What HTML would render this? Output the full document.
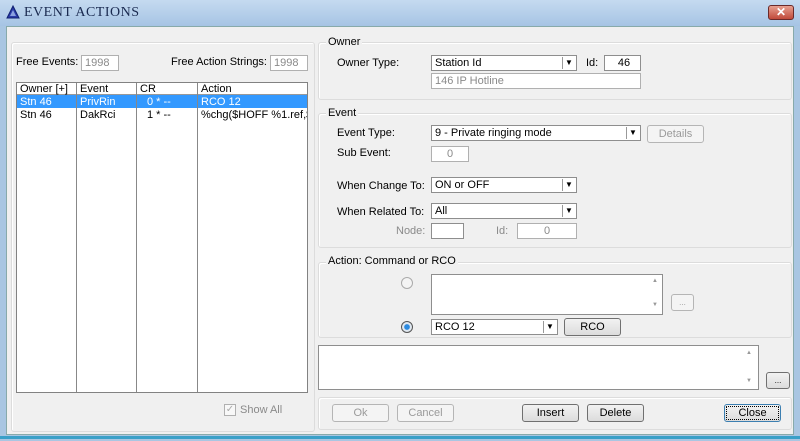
<!DOCTYPE html>
<html><head><style>
*{box-sizing:border-box;margin:0;padding:0}
body{width:800px;height:441px;overflow:hidden;background:#a9c6e2;font-family:"Liberation Sans",sans-serif;font-size:11px;color:#000;position:relative}
.a{position:absolute}
.tb{left:0;top:0;width:800px;height:26px;background:linear-gradient(#c5daf0,#a6c4e4);}
.body{left:6px;top:26px;width:788px;height:409px;background:#f0f0f0;border:1px solid #8aa;}
.grp{position:absolute;border:1px solid #dcdcdc;border-radius:3px;box-shadow:inset 1px 1px 0 #fff}
.gl{position:absolute;background:#f0f0f0;padding:0 2px;color:#000}
.in{position:absolute;background:#fff;border:1px solid #8e8e8e;height:16px;line-height:14px;padding-left:3px}
.dis{color:#8a8a8a;border-color:#b0b0b0}
.dd{position:absolute;right:1px;top:1px;width:13px;height:12px;border-left:1px solid #999;font-size:8px;text-align:center;line-height:12px}
.btn{position:absolute;height:18px;border:1px solid #707070;border-radius:3px;background:linear-gradient(#f2f2f2,#dcdcdc);text-align:center;line-height:16px}
.bd{color:#9a9a9a;border-color:#b5b5b5;background:#f4f4f4}
.lbl{position:absolute}
</style></head><body>
<div class="a tb"></div>
<svg class="a" style="left:6px;top:5px" width="14" height="14"><polygon points="7,1 13,13 1,13" fill="#2a3aa8" stroke="#102070"/><polygon points="7,5 10,11 4,11" fill="#8aa0e0"/></svg>
<div class="a" style="left:24px;top:5px;font-family:'Liberation Serif',serif;font-size:14px;color:#1a2a50;letter-spacing:0.5px">EVENT ACTIONS</div>
<div class="a" style="left:768px;top:5px;width:26px;height:15px;border:1px solid #6a2a2a;border-radius:3px;background:linear-gradient(#e8a090,#c04a3a);color:#fff;font-weight:bold;text-align:center;line-height:13px;font-size:12px">✕</div>
<div class="a body"></div>
<div class="a" style="left:0;top:436px;width:800px;height:3px;background:#3aa0c8"></div>

<!-- left group -->
<div class="grp" style="left:11px;top:42px;width:304px;height:390px"></div>
<div class="lbl" style="left:16px;top:56px">Free Events:</div>
<div class="in dis" style="left:81px;top:55px;width:38px">1998</div>
<div class="lbl" style="left:171px;top:56px">Free Action Strings:</div>
<div class="in dis" style="left:270px;top:55px;width:38px">1998</div>
<div class="a" style="left:16px;top:82px;width:292px;height:311px;background:#fff;border:1px solid #828282"></div>
<div class="a" style="left:17px;top:83px;width:290px;height:12px;border-bottom:1px solid #999"></div>
<div class="a" style="left:17px;top:95px;width:290px;height:13px;background:#3399ff"></div>
<div class="a" style="left:76px;top:83px;width:1px;height:309px;background:#888"></div>
<div class="a" style="left:136px;top:83px;width:1px;height:309px;background:#888"></div>
<div class="a" style="left:197px;top:83px;width:1px;height:309px;background:#888"></div>
<div class="lbl" style="left:20px;top:83px">Owner [+]</div><div class="lbl" style="left:80px;top:83px">Event</div><div class="lbl" style="left:140px;top:83px">CR</div><div class="lbl" style="left:201px;top:83px">Action</div>
<div class="lbl" style="left:20px;top:96px;color:#fff">Stn 46</div><div class="lbl" style="left:80px;top:96px;color:#fff">PrivRin</div><div class="lbl" style="left:147px;top:96px;color:#fff">0 * --</div><div class="lbl" style="left:201px;top:96px;color:#fff">RCO 12</div>
<div class="lbl" style="left:20px;top:109px">Stn 46</div><div class="lbl" style="left:80px;top:109px">DakRci</div><div class="lbl" style="left:147px;top:109px">1 * --</div><div class="lbl" style="left:201px;top:109px;width:106px;overflow:hidden;white-space:nowrap">%chg($HOFF %1.ref,$I</div>
<div class="a" style="left:224px;top:404px;width:12px;height:12px;border:1px solid #b0b0b0;background:#f8f8f8;color:#aaa;font-size:10px;line-height:10px;text-align:center">✓</div>
<div class="lbl" style="left:240px;top:404px;color:#8a8a8a">Show All</div>

<!-- Owner -->
<div class="grp" style="left:318px;top:42px;width:474px;height:58px"></div>
<div class="gl" style="left:326px;top:36px">Owner</div>
<div class="lbl" style="left:337px;top:57px">Owner Type:</div>
<div class="in" style="left:431px;top:55px;width:146px">Station Id<div class="dd">▼</div></div>
<div class="lbl" style="left:586px;top:57px">Id:</div>
<div class="in" style="left:604px;top:55px;width:37px;text-align:center">46</div>
<div class="in dis" style="left:431px;top:73px;width:210px">146 IP Hotline</div>

<!-- Event -->
<div class="grp" style="left:318px;top:113px;width:474px;height:135px"></div>
<div class="gl" style="left:326px;top:107px">Event</div>
<div class="lbl" style="left:337px;top:127px">Event Type:</div>
<div class="in" style="left:431px;top:125px;width:210px">9 - Private ringing mode<div class="dd">▼</div></div>
<div class="btn bd" style="left:647px;top:125px;width:57px">Details</div>
<div class="lbl" style="left:337px;top:147px">Sub Event:</div>
<div class="in dis" style="left:431px;top:146px;width:38px;text-align:center;padding:0">0</div>
<div class="lbl" style="left:337px;top:180px">When Change To:</div>
<div class="in" style="left:431px;top:177px;width:146px">ON or OFF<div class="dd">▼</div></div>
<div class="lbl" style="left:337px;top:206px">When Related To:</div>
<div class="in" style="left:431px;top:203px;width:146px">All<div class="dd">▼</div></div>
<div class="lbl" style="left:396px;top:225px;color:#8a8a8a">Node:</div>
<div class="in" style="left:431px;top:223px;width:33px"></div>
<div class="lbl" style="left:496px;top:225px;color:#8a8a8a">Id:</div>
<div class="in dis" style="left:517px;top:223px;width:60px;text-align:center;padding:0">0</div>

<!-- Action -->
<div class="grp" style="left:318px;top:262px;width:474px;height:76px"></div>
<div class="gl" style="left:326px;top:255px">Action: Command or RCO</div>
<div class="a" style="left:401px;top:277px;width:12px;height:12px;border-radius:50%;border:1px solid #aaa;background:#f4f4f4"></div>
<div class="in" style="left:431px;top:274px;width:232px;height:41px"></div>
<div class="a" style="left:648px;top:275px;width:14px;height:39px;font-size:6px;color:#999;text-align:center;line-height:12px">▲<br><br>▼</div>
<div class="btn bd" style="left:671px;top:294px;width:23px;height:17px;font-size:8px">...</div>
<div class="a" style="left:401px;top:321px;width:12px;height:12px;border-radius:50%;border:1px solid #555;background:radial-gradient(circle,#2c8ae0 35%,#e0e8f0 45%)"></div>
<div class="in" style="left:431px;top:319px;width:127px">RCO 12<div class="dd">▼</div></div>
<div class="btn" style="left:564px;top:318px;width:57px">RCO</div>

<div class="in" style="left:318px;top:345px;width:441px;height:45px"></div>
<div class="a" style="left:742px;top:346px;width:14px;height:43px;font-size:6px;color:#999;text-align:center;line-height:14px">▲<br><br>▼</div>
<div class="btn" style="left:766px;top:372px;width:24px;height:17px;font-size:8px">...</div>

<!-- bottom -->
<div class="grp" style="left:318px;top:397px;width:474px;height:33px"></div>
<div class="btn bd" style="left:332px;top:404px;width:57px">Ok</div>
<div class="btn bd" style="left:397px;top:404px;width:57px">Cancel</div>
<div class="btn" style="left:522px;top:404px;width:57px">Insert</div>
<div class="btn" style="left:587px;top:404px;width:57px">Delete</div>
<div class="btn" style="left:724px;top:404px;width:57px;border-color:#3c7fb1;outline:1px dotted #000;outline-offset:-3px">Close</div>
</body></html>
